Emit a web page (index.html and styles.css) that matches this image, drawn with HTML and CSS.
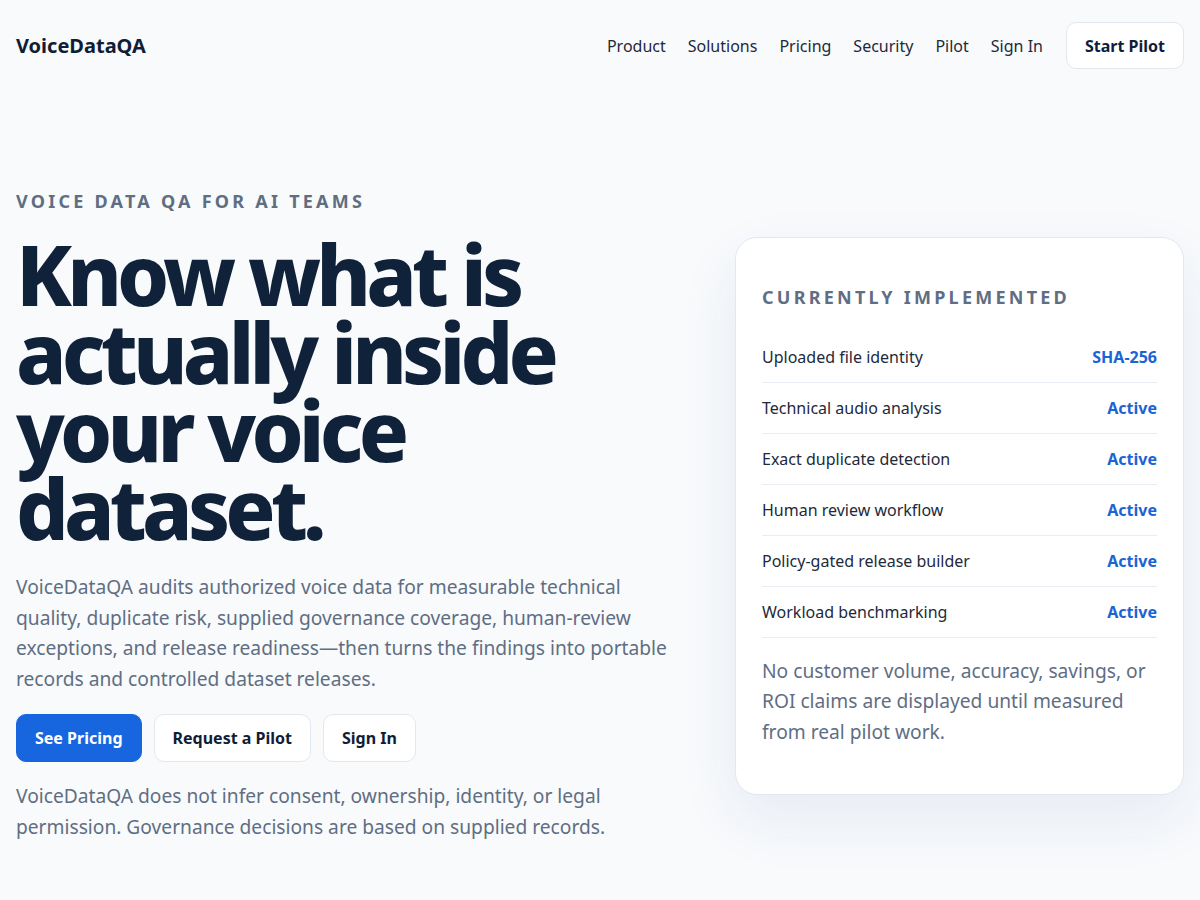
FILE: index.html
```html
<!DOCTYPE html>
<html lang="en">
<head>
<meta charset="utf-8">
<title>VoiceDataQA</title>
<link rel="stylesheet" href="styles.css">
</head>
<body>
<header class="site-header">
  <a class="logo" href="#">VoiceDataQA</a>
  <nav class="nav">
    <a href="#">Product</a>
    <a href="#">Solutions</a>
    <a href="#">Pricing</a>
    <a href="#">Security</a>
    <a href="#">Pilot</a>
    <a href="#">Sign In</a>
    <a class="btn btn-outline nav-cta" href="#">Start Pilot</a>
  </nav>
</header>
<main class="hero">
  <div class="hero-copy">
    <p class="eyebrow">Voice data QA for AI teams</p>
    <h1 class="headline">Know what is actually inside your voice dataset.</h1>
    <p class="lead">VoiceDataQA audits authorized voice data for measurable technical quality, duplicate risk, supplied governance coverage, human-review exceptions, and release readiness—then turns the findings into portable records and controlled dataset releases.</p>
    <div class="actions">
      <a class="btn btn-primary" href="#">See Pricing</a>
      <a class="btn btn-outline" href="#">Request a Pilot</a>
      <a class="btn btn-outline" href="#">Sign In</a>
    </div>
    <p class="lead note">VoiceDataQA does not infer consent, ownership, identity, or legal permission. Governance decisions are based on supplied records.</p>
  </div>
  <aside class="card">
    <h2 class="card-title">Currently implemented</h2>
    <ul class="status-list">
      <li><span>Uploaded file identity</span><strong>SHA-256</strong></li>
      <li><span>Technical audio analysis</span><strong>Active</strong></li>
      <li><span>Exact duplicate detection</span><strong>Active</strong></li>
      <li><span>Human review workflow</span><strong>Active</strong></li>
      <li><span>Policy-gated release builder</span><strong>Active</strong></li>
      <li><span>Workload benchmarking</span><strong>Active</strong></li>
    </ul>
    <p class="card-note">No customer volume, accuracy, savings, or ROI claims are displayed until measured from real pilot work.</p>
  </aside>
</main>
</body>
</html>
```
FILE: styles.css
```css
* { box-sizing: border-box; }
html, body { margin: 0; padding: 0; }
body {
  background: #f8fafc;
  color: #0f1e36;
  font-family: "Noto Sans", "Open Sans", sans-serif;
  -webkit-font-smoothing: antialiased;
}
a { text-decoration: none; color: inherit; }

.site-header {
  display: flex;
  align-items: center;
  justify-content: space-between;
  padding: 22px 16px;
}
.logo {
  font-size: 20px;
  font-weight: 700;
  color: #0f1e36;
}
.nav {
  display: flex;
  align-items: center;
  gap: 22px;
  font-size: 16px;
  color: #1e293b;
}
.nav-cta { margin-left: 1px; }

.btn {
  display: inline-flex;
  align-items: center;
  justify-content: center;
  height: 48px;
  padding: 0 18px;
  border-radius: 10px;
  font-size: 16px;
  font-weight: 700;
  border: 1px solid #e2e8f0;
  background: #fff;
  color: #0f1e36;
}
.nav .btn { height: 47px; padding: 0 18px; color: #0f1e36; }
.btn-primary {
  background: #1766e0;
  border-color: #1766e0;
  color: #fff;
}

.hero {
  display: grid;
  grid-template-columns: 672px 449px;
  column-gap: 47px;
  align-items: center;
  padding: 98px 16px 40px;
}
.eyebrow {
  margin: 0 0 22px;
  font-size: 18px;
  font-weight: 700;
  letter-spacing: 0.18em;
  text-transform: uppercase;
  color: #5f6e83;
}
.headline {
  margin: 0 0 25px;
  font-size: 83px;
  line-height: 78px;
  font-weight: 800;
  letter-spacing: -0.058em;
  color: #10213a;
  max-width: 600px;
}
.lead {
  margin: 0;
  font-size: 19.2px;
  line-height: 30.7px;
  color: #5f6e83;
}
.actions {
  display: flex;
  gap: 12px;
  margin: 19px 0 19px;
}

.card {
  background: #fff;
  border: 1px solid #e2e8f0;
  border-radius: 22px;
  padding: 46px 26px 46px;
  box-shadow: 0 24px 60px rgba(30, 64, 140, 0.08);
}
.card-title {
  margin: 0 0 21px;
  font-size: 18px;
  line-height: 27px;
  font-weight: 700;
  letter-spacing: 0.18em;
  text-transform: uppercase;
  color: #5f6e83;
}
.status-list {
  list-style: none;
  margin: 0;
  padding: 0;
}
.status-list li {
  display: flex;
  justify-content: space-between;
  align-items: center;
  padding: 13px 0;
  line-height: 24px;
  font-size: 16px;
  color: #1e293b;
  border-bottom: 1px solid #e8edf3;
}
.status-list strong {
  color: #1a64d4;
  font-weight: 700;
}
.card-note {
  margin: 18px 0 0;
  font-size: 19.2px;
  line-height: 30.7px;
  color: #5f6e83;
}
```
